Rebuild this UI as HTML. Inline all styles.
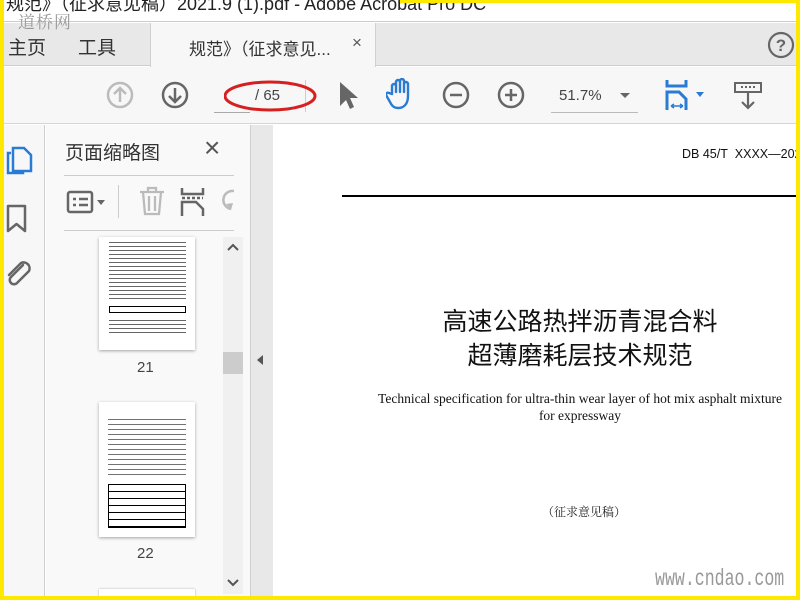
<!DOCTYPE html>
<html><head><meta charset="utf-8"><style>
*{margin:0;padding:0;box-sizing:border-box}
body{width:800px;height:600px;overflow:hidden;position:relative;background:#fff;font-family:"Liberation Sans","Noto Sans CJK SC",sans-serif}
.a{position:absolute}
.se{font-family:"Liberation Serif","Noto Serif CJK SC",serif}
</style></head><body>
<!-- title bar -->
<div class="a" style="left:0;top:0;width:800px;height:22px;background:#fff;border-bottom:1px solid #ccc"></div>
<div class="a" style="left:6px;top:-10px;font-size:18px;color:#222;white-space:nowrap">规范》（征求意见稿）2021.9 (1).pdf - Adobe Acrobat Pro DC</div>
<!-- tab bar -->
<div class="a" style="left:0;top:23px;width:800px;height:43px;background:#e8e8e8;border-bottom:1px solid #cfcfcf"></div>
<div class="a" style="left:150px;top:23px;width:226px;height:44px;background:#f7f7f7;border-left:1px solid #d0d0d0;border-right:1px solid #d0d0d0"></div>
<div class="a" style="left:18px;top:8px;font-size:17px;color:#9a9a9a;letter-spacing:1px;z-index:5;font-family:'Noto Serif CJK SC',serif">道桥网</div>
<div class="a" style="left:8px;top:33px;font-size:19px;color:#333">主页</div>
<div class="a" style="left:78px;top:33px;font-size:19px;color:#333">工具</div>
<div class="a" style="left:189px;top:35px;font-size:17px;color:#333">规范》（征求意见...</div>
<div class="a" style="left:352px;top:33px;font-size:17px;color:#555">×</div>
<svg class="a" style="left:766px;top:30px" width="30" height="30"><circle cx="15" cy="15" r="12" fill="none" stroke="#666" stroke-width="2.2"/><text x="15" y="21" text-anchor="middle" font-size="17" font-weight="bold" fill="#666" font-family="Liberation Sans">?</text></svg>
<!-- toolbar -->
<div class="a" style="left:0;top:67px;width:800px;height:57px;background:#f7f7f7;border-bottom:1px solid #d6d6d6"></div>
<svg class="a" style="left:105px;top:80px" width="30" height="30"><circle cx="15" cy="15" r="12" fill="none" stroke="#bbb" stroke-width="2.5"/><path d="M15 22V9M9 14l6-6 6 6" fill="none" stroke="#bbb" stroke-width="2.5"/></svg>
<svg class="a" style="left:160px;top:80px" width="30" height="30"><circle cx="15" cy="15" r="12" fill="none" stroke="#666" stroke-width="2.5"/><path d="M15 8v13M9 16l6 6 6-6" fill="none" stroke="#666" stroke-width="2.5"/></svg>
<div class="a" style="left:214px;top:112px;width:36px;height:1px;background:#aaa"></div>
<div class="a" style="left:305px;top:80px;width:1px;height:32px;background:#ccc"></div>
<svg class="a" style="left:224px;top:78px" width="100" height="36"><ellipse cx="46" cy="18" rx="45" ry="14" fill="none" stroke="#d62020" stroke-width="3"/></svg>
<div class="a" style="left:255px;top:87px;font-size:15px;color:#444">/ 65</div>
<svg class="a" style="left:336px;top:80px" width="24" height="30"><path d="M4 2v24l6-6 4 9 4-2-4-9h8z" fill="#666"/></svg>
<svg class="a" style="left:386px;top:78px" width="30" height="34"><path d="M6 16V8a2 2 0 014 0v6V4a2 2 0 014 0v10V3a2 2 0 014 0v11V6a2 2 0 014 0v12c0 8-4 12-10 12-4 0-6-2-8-6l-4-7a2 2 0 013-2z" fill="none" stroke="#2a7bd4" stroke-width="2.4" stroke-linejoin="round"/></svg>
<svg class="a" style="left:441px;top:80px" width="30" height="30"><circle cx="15" cy="15" r="12" fill="none" stroke="#666" stroke-width="2.5"/><path d="M9 15h12" stroke="#666" stroke-width="2.5"/></svg>
<svg class="a" style="left:496px;top:80px" width="30" height="30"><circle cx="15" cy="15" r="12" fill="none" stroke="#666" stroke-width="2.5"/><path d="M9 15h12M15 9v12" stroke="#666" stroke-width="2.5"/></svg>
<div class="a" style="left:559px;top:87px;font-size:15px;color:#444">51.7%</div>
<div class="a" style="left:620px;top:93px;border:5px solid transparent;border-top:5px solid #666"></div>
<div class="a" style="left:551px;top:112px;width:87px;height:1px;background:#bbb"></div>
<svg class="a" style="left:660px;top:78px" width="50" height="34"><path d="M7 2v6h19V2" fill="none" stroke="#2a7bd4" stroke-width="3"/><path d="M7 32V14h12l7 7v11" fill="none" stroke="#2a7bd4" stroke-width="3"/><path d="M11 28h12M11 28l3-2M11 28l3 2M23 28l-3-2M23 28l-3 2" stroke="#2a7bd4" stroke-width="1.5"/><path d="M36 14h8l-4 5z" fill="#2a7bd4"/></svg>
<svg class="a" style="left:733px;top:80px" width="30" height="30"><rect x="2" y="3" width="26" height="9" fill="none" stroke="#666" stroke-width="2"/><path d="M8 7h2M12 7h2M16 7h2M20 7h2" stroke="#666" stroke-width="2"/><path d="M15 13v15M9 22l6 6 6-6" fill="none" stroke="#666" stroke-width="2.2"/></svg>
<!-- left rail -->
<div class="a" style="left:4px;top:125px;width:41px;height:475px;background:#f7f7f7;border-right:1px solid #cfcfcf"></div>
<svg class="a" style="left:5px;top:145px" width="30" height="32"><path d="M6 8H3v20h15v-3" fill="none" stroke="#2a7bd4" stroke-width="2.5"/><path d="M8 3h11l7 7v16H8z" fill="none" stroke="#2a7bd4" stroke-width="2.5"/></svg>
<svg class="a" style="left:5px;top:204px" width="24" height="30"><path d="M3 2h17v25l-8.5-7L3 27z" fill="none" stroke="#666" stroke-width="2.5" stroke-linejoin="round"/></svg>
<svg class="a" style="left:3px;top:258px" width="30" height="32"><path d="M20 7L8 19a4 4 0 006 6l12-12a6 6 0 00-8-8L6 17" fill="none" stroke="#666" stroke-width="2.5" stroke-linecap="round"/></svg>
<!-- thumbs panel -->
<div class="a" style="left:46px;top:125px;width:205px;height:475px;background:#f9f9f9;border-right:1px solid #cfcfcf"></div>
<div class="a" style="left:65px;top:138px;font-size:19px;color:#333">页面缩略图</div>
<div class="a" style="left:204px;top:131px;font-size:28px;color:#555;line-height:34px">×</div>
<div class="a" style="left:64px;top:175px;width:170px;height:1px;background:#ccc"></div>
<div class="a" style="left:64px;top:230px;width:170px;height:1px;background:#ccc"></div>
<svg class="a" style="left:66px;top:190px" width="44" height="24"><rect x="2" y="2" width="24" height="20" rx="2" fill="none" stroke="#666" stroke-width="2.5"/><path d="M7 9h3M13 9h9M7 15h3M13 15h9" stroke="#666" stroke-width="2.5"/><path d="M31 10h8l-4 5z" fill="#666"/></svg>
<div class="a" style="left:118px;top:185px;width:1px;height:33px;background:#ccc"></div>
<svg class="a" style="left:138px;top:186px" width="28" height="30"><path d="M2 6h24M10 6V2h8v4M5 6l2 22h14l2-22M11 10v15M17 10v15" fill="none" stroke="#bbb" stroke-width="2.3"/></svg>
<svg class="a" style="left:180px;top:186px" width="26" height="32"><path d="M2 2v6h21V2" fill="none" stroke="#666" stroke-width="2.5"/><path d="M2 12h21" stroke="#666" stroke-width="2.5" stroke-dasharray="3 2"/><path d="M2 30V16h14l7 7v7" fill="none" stroke="#666" stroke-width="2.5"/></svg>
<svg class="a" style="left:220px;top:188px" width="14" height="28"><path d="M14 3a9 9 0 00-3 18" fill="none" stroke="#bbb" stroke-width="2.5"/><path d="M6 16l5 6 2-7z" fill="#bbb"/></svg>
<!-- scrollbar -->
<div class="a" style="left:223px;top:237px;width:20px;height:357px;background:#f0f0f0"></div>
<div class="a" style="left:223px;top:352px;width:20px;height:22px;background:#ccc"></div>
<svg class="a" style="left:227px;top:243px" width="12" height="10"><path d="M1 7l5-5 5 5" fill="none" stroke="#555" stroke-width="2"/></svg>
<svg class="a" style="left:227px;top:578px" width="12" height="10"><path d="M1 2l5 5 5-5" fill="none" stroke="#555" stroke-width="2"/></svg>
<!-- thumb 21 -->
<div class="a" style="left:99px;top:237px;width:96px;height:113px;background:#fff;box-shadow:0 1px 3px rgba(0,0,0,.35);overflow:hidden">
<div style="margin:3px 9px 0 10px;height:62px;background:repeating-linear-gradient(#fff 0 2px,#333 2px 3px,#fff 3px 4px);opacity:.75"></div>
<div style="margin:4px 9px 0 10px;height:7px;border:1px solid #000"></div>
<div style="margin:5px 9px 0 10px;height:18px;background:repeating-linear-gradient(#fff 0 2px,#333 2px 3px,#fff 3px 4px);opacity:.75"></div>
</div>
<div class="a" style="left:137px;top:359px;font-size:15px;color:#444">21</div>
<!-- thumb 22 -->
<div class="a" style="left:99px;top:402px;width:96px;height:135px;background:#fff;box-shadow:0 1px 3px rgba(0,0,0,.35);overflow:hidden">
<div style="margin:14px 9px 0;height:62px;background:repeating-linear-gradient(#fff 0 3px,#444 3px 4px,#fff 4px 5px);opacity:.75"></div>
<div style="margin:6px 9px 0;height:44px;border:1px solid #000;background:repeating-linear-gradient(#fff 0 6px,#000 6px 7px)"></div>
</div>
<div class="a" style="left:137px;top:545px;font-size:15px;color:#444">22</div>
<div class="a" style="left:99px;top:589px;width:96px;height:10px;background:#fff;box-shadow:0 0 2px rgba(0,0,0,.3)"></div>
<!-- collapse strip -->
<div class="a" style="left:251px;top:125px;width:22px;height:475px;background:#e8e8e8"></div>
<div class="a" style="left:257px;top:355px;border:5px solid transparent;border-right:6px solid #555;border-left:0"></div>
<!-- document -->
<div class="a" style="left:273px;top:125px;width:527px;height:475px;background:#fff"></div>
<div class="a" style="left:682px;top:147px;font-size:12.5px;color:#111;white-space:nowrap">DB 45/T&nbsp; XXXX—202</div>
<div class="a" style="left:342px;top:195px;width:458px;height:1.5px;background:#000"></div>
<div class="a" style="left:410px;top:303px;width:340px;text-align:center;font-size:25px;line-height:34px;color:#111;font-family:'Noto Sans CJK SC',sans-serif">高速公路热拌沥青混合料<br>超薄磨耗层技术规范</div>
<div class="a se" style="left:360px;top:390px;width:440px;text-align:center;font-size:13.5px;line-height:17px;color:#111">Technical specification for ultra-thin wear layer of hot mix asphalt mixture<br>for expressway</div>
<div class="a se" style="left:542px;top:503px;font-size:12px;color:#222">（征求意见稿）</div>
<div class="a" style="left:655px;top:566px;font-size:23px;color:#999;font-family:'Liberation Mono',monospace;transform:scaleX(.72);transform-origin:left;white-space:nowrap">www.cndao.com</div>
<!-- yellow border -->
<div class="a" style="left:0;top:0;width:4px;height:600px;background:#ffe800"></div>
<div class="a" style="left:796px;top:0;width:4px;height:600px;background:#ffe800"></div>
<div class="a" style="left:0;top:596px;width:800px;height:4px;background:#ffe800"></div>
<div class="a" style="left:400px;top:0;width:400px;height:3px;background:#ffe800"></div>
</body></html>
